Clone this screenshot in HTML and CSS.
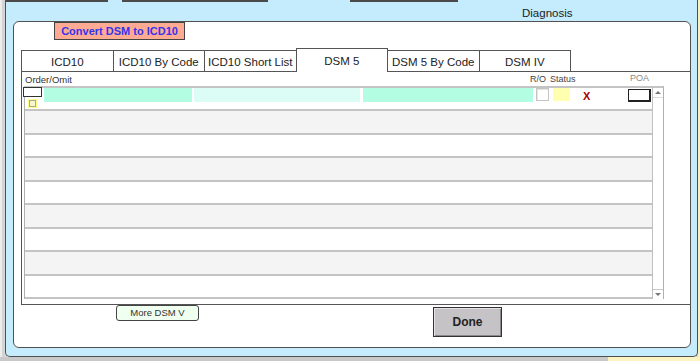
FILE: index.html
```html
<!doctype html>
<html>
<head>
    <meta charset="utf-8">
    <title>Diagnosis</title>
    <link rel="stylesheet" href="styles.css">
</head>

<body>
    <div class="screen">
        <div class="gutter"></div>
        <div class="win">
            <div class="topline"></div>
            <div class="title">Diagnosis</div>
            <div class="panel">
                <div class="convert">Convert DSM to ICD10</div>

                <div class="tabs">
                    <div class="tab">ICD10</div>
                    <div class="tab">ICD10 By Code</div>
                    <div class="tab">ICD10 Short List</div>
                    <div class="tab active">DSM 5</div>
                    <div class="tab">DSM 5 By Code</div>
                    <div class="tab">DSM IV</div>
                </div>

                <div class="frame">
                    <div class="head">
                        <span class="h-order">Order/Omit</span>
                        <span class="h-ro">R/O</span>
                        <span class="h-status">Status</span>
                        <span class="h-poa">POA</span>
                    </div>
                    <div class="grid">
                        <div class="rows">
                            <div class="row first">
                                <div class="order">
                                    <div class="ordbox"></div>
                                    <div class="chk"></div>
                                </div>
                                <div class="fld green w1"></div>
                                <div class="fld light w2"></div>
                                <div class="fld green w3"></div>
                                <div class="ro"></div>
                                <div class="status"></div>
                                <div class="del">X</div>
                                <div class="poa"></div>
                            </div>
                            <div class="row"></div>
                            <div class="row"></div>
                            <div class="row"></div>
                            <div class="row"></div>
                            <div class="row"></div>
                            <div class="row"></div>
                            <div class="row"></div>
                            <div class="row"></div>
                        </div>
                        <div class="scroll">
                            <div class="sbtn up"><span></span></div>
                            <div class="strack"></div>
                            <div class="sbtn down"><span></span></div>
                        </div>
                    </div>
                </div>

                <div class="actions">
                    <div class="more">More DSM V</div>
                    <div class="done">Done</div>
                </div>
            </div>
        </div>
        <div class="edge"></div>
    </div>
    <div class="floor">
        <div class="floor-grey"></div>
        <div class="floor-yellow"></div>
    </div>
</body>
</html>
```

FILE: styles.css
```css
* {
  box-sizing: border-box;
}

html, body {
  margin: 0;
  height: 361px;
  overflow: hidden;
  font-family: "Liberation Sans", Arial, sans-serif;
  color: #222;
}

body {
  background: #d8d8d8;
}

.screen {
  display: flex;
  height: 357px;
}

.gutter {
  width: 5px;
  border-left: 2px solid #ececec;
  background: #d4d4d4;
}

.edge {
  flex: 1;
  background: #f7f1c4;
}

.floor {
  display: flex;
  height: 4px;
}
.floor-grey {width: 608px; background: #c9c9c9;}
.floor-yellow {flex: 1; background: #fbf3c2;}

/* outer window */
.win {
  width: 693px;
  height: 357px;
  background: #c5ecfc;
  border: 1px solid #505050;
  border-top: 0;
  border-radius: 0 0 5px 5px;
}

.topline {
  height: 2px;
  background: linear-gradient(to right, transparent 0, #4a4a4a 0 102px, transparent 102px 116px, #4a4a4a 116px 262px, transparent 262px 344px, #4a4a4a 344px 452px, transparent 452px);
}

.title {
  height: 19px;
  line-height: 22px;
  padding-left: 516px;
  font-size: 11.5px;
}

/* white panel */
.panel {
  margin-left: 7px;
  width: 678px;
  height: 327px;
  background: #fff;
  border: 1px solid #505050;
  border-radius: 6px;
}

.convert {
  margin-left: 40px;
  width: 131px;
  height: 18px;
  background: #ffab93;
  border: 1px solid #444;
  color: #3535ea;
  font-size: 11px;
  font-weight: bold;
  line-height: 16px;
  text-align: center;
}

/* tabs */
.tabs {
  display: flex;
  align-items: flex-end;
  margin: 8px 0 0 7px;
  height: 23px;
}

.tab {
  width: 92.5px;
  height: 21px;
  border: 1px solid #555;
  border-bottom: 0;
  background: #fff;
  font-size: 11.5px;
  line-height: 22px;
  text-align: center;
}
.tab + .tab {margin-left: -1px;}

.tab.active {
  height: 24px;
  margin-bottom: -1px;
  line-height: 25px;
  position: relative;
  z-index: 1;
}

/* tab content */
.frame {
  margin-left: 7px;
  height: 234px;
  border: 1px solid #555;
  border-right: 0;
}

.head {
  display: flex;
  align-items: center;
  height: 14px;
  padding-left: 3px;
  font-size: 9px;
  color: #444;
}
.h-order {width: 505px; font-size: 9.5px; color: #333;}
.h-ro {width: 20px;}
.h-status {width: 80px;}
.h-poa {color: #8a8a8a; margin-top: -2px;}

.grid {
  display: flex;
  margin-left: 2px;
  width: 640px;
  border-left: 1px solid #b0b0b0;
  border-right: 1px solid #b0b0b0;
  border-top: 2px solid #c4c4c4;
}

.rows {flex: 1;}

.row {
  height: 23.45px;
  border-bottom: 2px solid #c4c4c4;
}
.row:nth-child(even) {background: #f4f4f4;}

.row.first {
  display: flex;
  align-items: flex-start;
}

.order {
  margin-left: -2px;
  width: 19px;
}
.ordbox {
  margin-top: -1px;
  width: 19px;
  height: 10px;
  border: 1px solid #333;
  background: #fff;
}
.chk {
  margin: 2px 0 0 5px;
  width: 9px;
  height: 9px;
  border: 1px solid #ffff88;
  box-shadow: inset 0 0 0 1px #a9a99c;
  background: #f6f6cc;
}

.fld {height: 14px;}
.green {background: #b3fde3;}
.light {background: #dcfdf6;}
.w1 {margin-left: 2px; width: 148px;}
.w2 {margin-left: 2px; width: 166px;}
.w3 {margin-left: 3px; width: 170px;}

.ro {
  margin-left: 3px;
  width: 13px;
  height: 13px;
  border: 1px solid #c4c4c4;
  box-shadow: inset 1px 1px 0 #e6e6e6;
  background: #fff;
}
.status {
  margin-left: 4px;
  width: 17px;
  height: 13px;
  background: #ffffb0;
}
.del {
  margin: 2px 0 0 13px;
  width: 10px;
  font-size: 11px;
  font-weight: bold;
  line-height: 13px;
  color: #a80000;
}
.poa {
  margin: 1px 0 0 35px;
  width: 23px;
  height: 13px;
  border: 1px solid #222;
  border-right-width: 2px;
  border-bottom-width: 2px;
  background: #fff;
}

/* scrollbar */
.scroll {
  display: flex;
  flex-direction: column;
  width: 11px;
  border-left: 1px solid #c0c0c0;
  background: #fff;
}
.strack {flex: 1;}
.sbtn {
  height: 10px;
  display: flex;
  align-items: center;
  justify-content: center;
}
.sbtn.up {border-bottom: 1px solid #dcdcdc;}
.sbtn.down {border-top: 1px solid #c8c8c8;}
.sbtn span {
  width: 0;
  height: 0;
  border-left: 3px solid transparent;
  border-right: 3px solid transparent;
}
.up span {border-bottom: 3px solid #777;}
.down span {border-top: 3px solid #777;}

/* bottom buttons */
.actions {
  display: flex;
  align-items: flex-start;
}

.more {
  margin-left: 102px;
  width: 83px;
  height: 16px;
  border: 1px solid #444;
  border-radius: 3px;
  background: #effff0;
  font-size: 9.5px;
  line-height: 14px;
  text-align: center;
  color: #333;
}

.done {
  margin: 2px 0 0 234px;
  width: 69px;
  height: 30px;
  border: 1px solid #333;
  box-shadow: inset 1px 1px 0 #e4e2e4, inset -1px -1px 0 #8a888a;
  background: #c6c3c6;
  font-size: 12px;
  font-weight: bold;
  line-height: 28px;
  text-align: center;
}
```
